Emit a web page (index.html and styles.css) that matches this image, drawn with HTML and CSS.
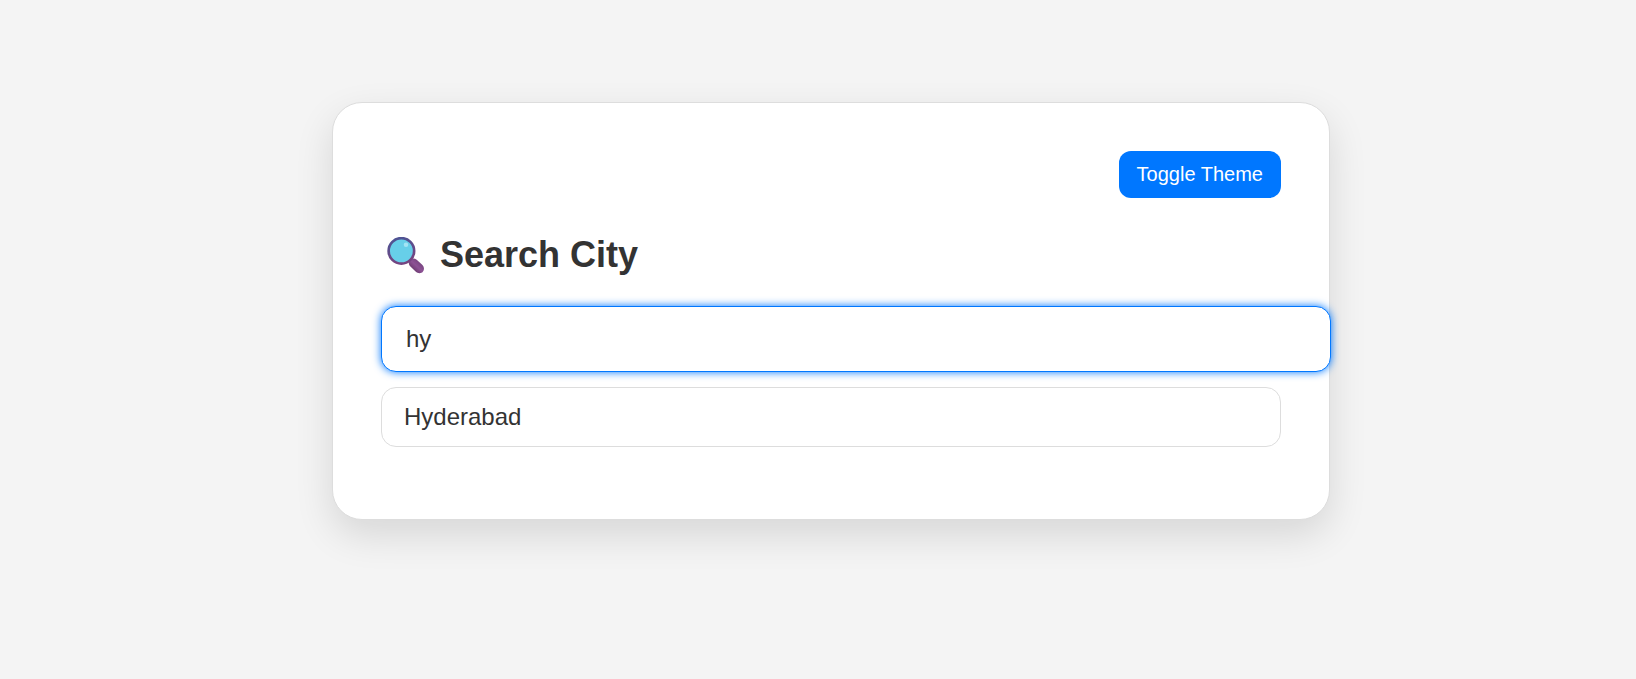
FILE: index.html
```html
<!DOCTYPE html>
<html lang="en">
<head>
<meta charset="utf-8">
<meta name="viewport" content="width=device-width, initial-scale=1">
<title>Search City</title>
<link rel="stylesheet" href="styles.css">
</head>
<body>
<main class="card">
  <div class="toolbar">
    <button class="toggle" type="button">Toggle Theme</button>
  </div>
  <h1 class="title">
    <svg class="title-icon" viewBox="0 0 36 36" aria-hidden="true">
      <defs>
        <linearGradient id="rim" x1="0" y1="0" x2="0.3" y2="1">
          <stop offset="0" stop-color="#4a5596"/>
          <stop offset="1" stop-color="#744480"/>
        </linearGradient>
        <linearGradient id="grip" x1="0" y1="1" x2="1" y2="0">
          <stop offset="0.2" stop-color="#653568"/>
          <stop offset="0.5" stop-color="#8d5295"/>
          <stop offset="0.8" stop-color="#73427b"/>
        </linearGradient>
      </defs>
      <path d="M22 22l3 3" stroke="#8a7590" stroke-width="3"/>
      <path d="M22.500 22c2-1.600 4.500-1.500 6.400.1l5.100 4.600c2.300 2.200 2.600 5.200.9 7.100s-4.800 1.900-7.100-.2l-5-4.800c-2-2-2.200-5-.3-6.800z" fill="url(#grip)"/>
      <circle cx="14" cy="13.500" r="12.400" fill="#67cfe9" stroke="url(#rim)" stroke-width="2.600"/>
      <circle cx="18.500" cy="7.500" r="2.200" fill="#a4e4f4"/>
    </svg>
    <span>Search City</span>
  </h1>
  <input class="search" type="text" value="hy" aria-label="Search city" autocomplete="off" spellcheck="false">
  <ul class="results">
    <li class="result">Hyderabad</li>
  </ul>
</main>
</body>
</html>
```
FILE: styles.css
```css
body {
  margin: 0;
  padding: 102px 0 102px 26px;
  background: #f4f4f4;
  color: #333;
  font-family: "Liberation Sans", Arial, sans-serif;
}

.card {
  max-width: 900px;
  margin: 0 auto;
  padding: 48px 48px 72px;
  border: 1px solid #ddd;
  border-radius: 30px;
  background: #fff;
  box-shadow: 0 15px 38px rgba(0, 0, 0, 0.12);
}

.toolbar {
  display: flex;
  justify-content: flex-end;
}

.toggle {
  padding: 12px 18px;
  border: 0;
  border-radius: 12px;
  background: #07f;
  color: #fff;
  font: 20px/23px "Liberation Sans", Arial, sans-serif;
  cursor: pointer;
}

.title {
  display: flex;
  align-items: center;
  gap: 16px;
  margin: 36px 0 30px;
  padding-left: 6px;
  font-size: 36px;
  line-height: 42px;
}

.title-icon {
  width: 37px;
  height: 37px;
}

.search {
  display: block;
  width: 100%;
  padding: 18px 24px;
  border: 1px solid #07f;
  border-radius: 15px;
  outline: 0;
  background: #fff;
  box-shadow: 0 0 8px #07f;
  color: #333;
  font: 24px/28px "Liberation Sans", Arial, sans-serif;
}

.results {
  margin: 15px 0 0;
  padding: 0;
  list-style: none;
}

.result {
  padding: 15px 22px;
  border: 1px solid #ddd;
  border-radius: 15px;
  font-size: 24px;
  line-height: 28px;
}
```
